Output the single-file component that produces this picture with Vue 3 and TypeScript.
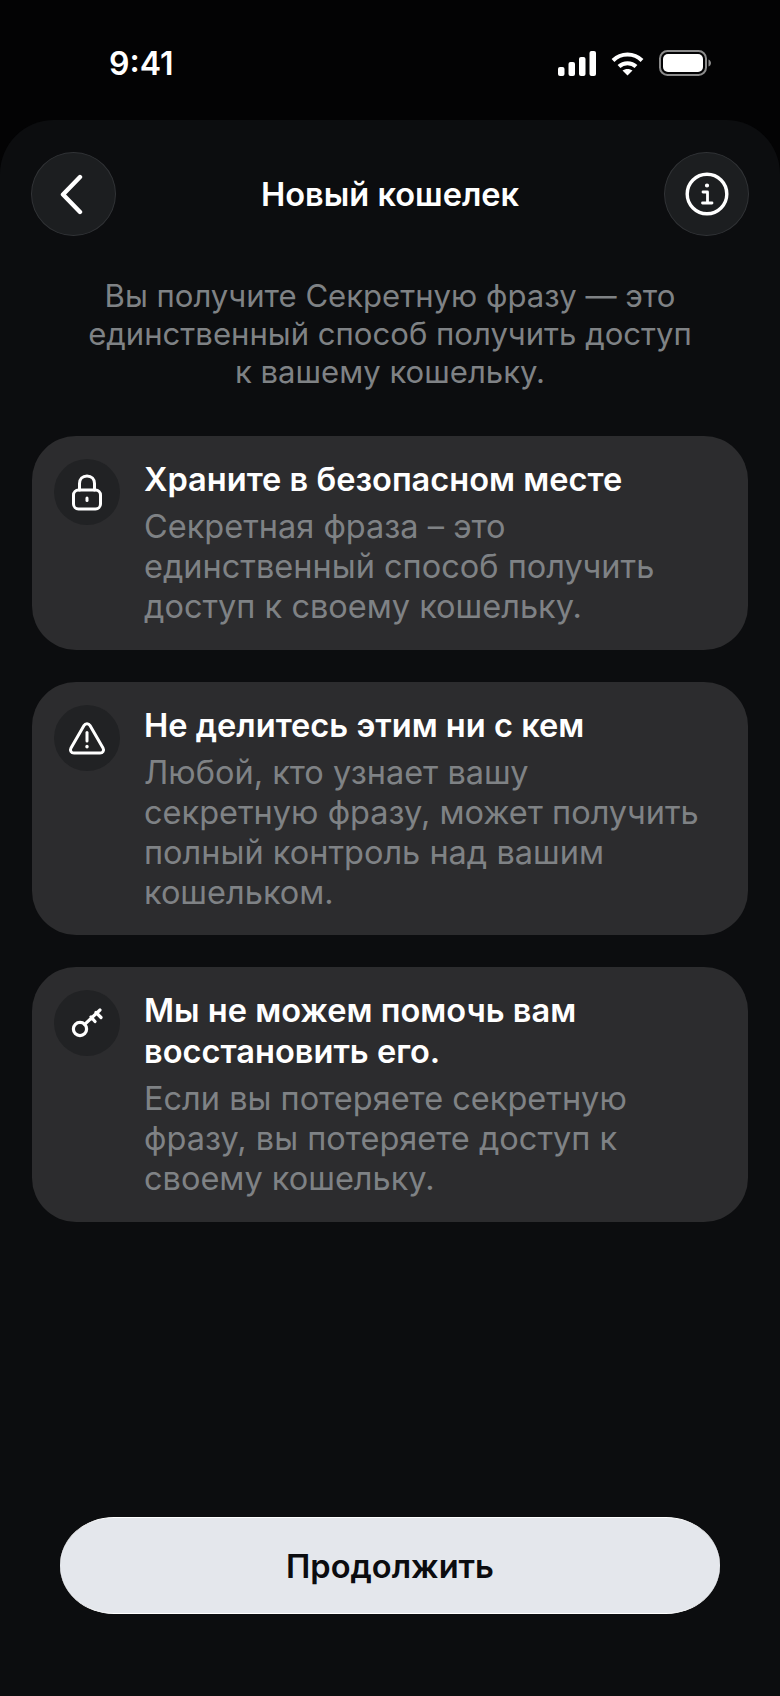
<template>
  <div class="screen">
    <div class="status-bar">
      <span class="time">9:41</span>
      <div class="status-icons">
        <svg width="38" height="25" viewBox="0 0 38 25" fill="#fff">
          <rect x="0" y="16" width="6.5" height="9" rx="2" />
          <rect x="10.5" y="11" width="6.5" height="14" rx="2" />
          <rect x="21" y="6" width="6.5" height="19" rx="2" />
          <rect x="31.5" y="0" width="6.5" height="25" rx="2" />
        </svg>
        <svg width="33" height="25" viewBox="0 0 33 25" fill="none" stroke="#fff" stroke-width="4">
          <path d="M2 9.5C10 1.5 23 1.5 31 9.5" />
          <path d="M8 15.5C12.5 11 20.5 11 25 15.5" />
          <path d="M16.5 24.5L11.5 19.6C14 17.3 19 17.3 21.5 19.6Z" fill="#fff" stroke="none" />
        </svg>
        <svg width="52" height="26" viewBox="0 0 52 26" fill="none">
          <rect x="1" y="1" width="46" height="24" rx="7.5" stroke="#8b8b8b" stroke-width="2" />
          <rect x="4" y="4" width="40" height="18" rx="5" fill="#fff" />
          <path d="M49.5 9.5C51 10 52 11.5 52 13C52 14.5 51 16 49.5 16.5Z" fill="#8b8b8b" />
        </svg>
      </div>
    </div>

    <div class="sheet">
      <header class="nav">
        <button type="button" class="round-btn" aria-label="Назад">
          <svg width="30" height="42" viewBox="0 0 30 42" fill="none" stroke="#fff" stroke-width="4.4" stroke-linecap="round" stroke-linejoin="round">
            <path d="M21 4L4 21.5L21 39" />
          </svg>
        </button>
        <h1 class="nav-title">Новый кошелек</h1>
        <button type="button" class="round-btn" aria-label="Информация">
          <svg width="44" height="44" viewBox="0 0 44 44" fill="none" stroke="#fff" stroke-width="3.4" stroke-linecap="round" stroke-linejoin="round">
            <circle cx="22" cy="22" r="19.8" />
            <path d="M18 20H22.5V31M17.5 31H27" stroke-width="2.8" />
            <circle cx="22" cy="13.5" r="1.4" fill="#fff" stroke-width="1.4" />
          </svg>
        </button>
      </header>

      <p class="lead">Вы получите Секретную фразу — это единственный способ получить доступ <br />к вашему кошельку.</p>

      <div class="cards">
        <section v-for="card in cards" :key="card.title" class="card">
          <div class="card-icon">
            <svg v-if="card.icon === 'lock'" width="34" height="38" viewBox="0 0 34 38" fill="none" stroke="#fff" stroke-width="3" stroke-linecap="round" stroke-linejoin="round">
              <rect x="3.5" y="17" width="27" height="19" rx="5" />
              <path d="M9.5 17V10.5C9.5 6 12.5 3 17 3C21.5 3 24.5 6 24.5 10.5V17" />
              <path d="M17 25V27.5" />
            </svg>
            <svg v-else-if="card.icon === 'warn'" width="38" height="34" viewBox="0 0 38 34" fill="none" stroke="#fff" stroke-width="3" stroke-linecap="round" stroke-linejoin="round">
              <path d="M16 4.5C17.4 2 20.6 2 22 4.5L35 27C36.4 29.5 34.8 32 32 32H6C3.2 32 1.6 29.5 3 27Z" />
              <path d="M19 11.5V20" />
              <path d="M19 25.5V25.8" stroke-width="3.4" />
            </svg>
            <svg v-else width="34" height="32" viewBox="0 0 34 32" fill="none" stroke="#fff" stroke-width="3.2" stroke-linecap="round" stroke-linejoin="round">
              <circle cx="10" cy="22" r="6.6" />
              <path d="M14.7 17.3L30 3M26 5.5L31 10.5M21 10L25 14.5" />
            </svg>
          </div>
          <div class="card-text">
            <h2 class="card-title">{{ card.title }}</h2>
            <p class="card-body">{{ card.body }}</p>
          </div>
        </section>
      </div>

      <button type="button" class="continue">Продолжить</button>
    </div>
  </div>
</template>

<script setup lang="ts">
type IconName = 'lock' | 'warn' | 'key'

const cards: { icon: IconName; title: string; body: string }[] = [
  {
    icon: 'lock',
    title: 'Храните в безопасном месте',
    body: 'Секретная фраза – это единственный способ получить доступ к своему кошельку.',
  },
  {
    icon: 'warn',
    title: 'Не делитесь этим ни с кем',
    body: 'Любой, кто узнает вашу секретную фразу, может получить полный контроль над вашим кошельком.',
  },
  {
    icon: 'key',
    title: 'Мы не можем помочь вам восстановить его.',
    body: 'Если вы потеряете секретную фразу, вы потеряете доступ к своему кошельку.',
  },
]
</script>

<style>
html,
body {
  margin: 0;
  background: #030304;
}
</style>

<style scoped>
.screen {
  display: flex;
  flex-direction: column;
  width: 780px;
  height: 1696px;
  background: #030304;
  font-family: Inter, 'Liberation Sans', 'Noto Sans', sans-serif;
  overflow: hidden;
}

.status-bar {
  display: flex;
  align-items: center;
  justify-content: space-between;
  flex: none;
  box-sizing: border-box;
  height: 120px;
  padding: 6px 69px 0 109px;
}

.time {
  color: #fff;
  font-size: 32px;
  font-weight: 600;
}

.status-icons {
  display: flex;
  align-items: center;
  gap: 15px;
}

.sheet {
  display: flex;
  flex-direction: column;
  flex: 1;
  box-sizing: border-box;
  padding: 32px 31px 82px;
  background: #0c0d0f;
  border-radius: 54px 54px 0 0;
}

.nav {
  display: flex;
  align-items: center;
  justify-content: space-between;
}

.round-btn {
  display: flex;
  align-items: center;
  justify-content: center;
  box-sizing: border-box;
  width: 85px;
  height: 84px;
  padding: 0;
  background: #1c1e20;
  border: 1.5px solid #313336;
  border-radius: 50%;
}

.nav-title {
  margin: 0;
  color: #fff;
  font-size: 32.6px;
  font-weight: 600;
  line-height: 38px;
}

.lead {
  margin: 41px 0 0;
  color: #7f8285;
  font-size: 31.1px;
  line-height: 38px;
  text-align: center;
}

.cards {
  display: flex;
  flex-direction: column;
  gap: 32px;
  margin: 45px 1px 0;
}

.card {
  display: flex;
  gap: 24px;
  padding: 23px 43px 22.5px 22px;
  background: #2c2c2e;
  border-radius: 44px;
}

.card-icon {
  display: flex;
  align-items: center;
  justify-content: center;
  flex: none;
  width: 66px;
  height: 66px;
  background: #212224;
  border-radius: 50%;
}

.card-title {
  margin: 0;
  color: #fff;
  font-size: 32.6px;
  font-weight: 600;
  line-height: 41px;
}

.card-body {
  margin: 7px 0 0;
  color: #7f8285;
  font-size: 32.5px;
  line-height: 40px;
}

.continue {
  align-self: center;
  width: 660px;
  height: 97px;
  margin-top: auto;
  padding: 0;
  color: #0b0c0f;
  background: #e4e7ec;
  border: 0;
  border-top: 1px solid #fff;
  border-bottom: 1px solid #fff;
  border-radius: 54px / 48px;
  font-family: inherit;
  font-size: 32.6px;
  font-weight: 600;
}
</style>
